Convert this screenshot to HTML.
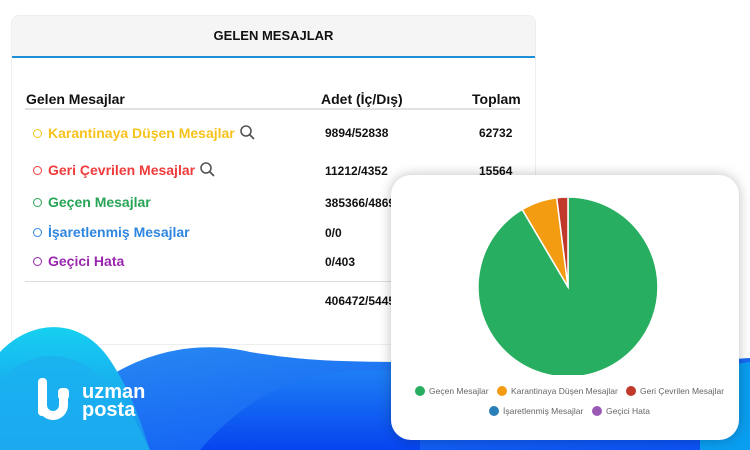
<!DOCTYPE html>
<html><head><meta charset="utf-8"><style>
*{margin:0;padding:0;box-sizing:border-box}
body{width:750px;height:450px;overflow:hidden;background:#fff;position:relative;font-family:"Liberation Sans",Arial,sans-serif}
.card{position:absolute;left:11px;top:15px;width:525px;height:330px;border:1px solid #eee;border-radius:8px;background:#fff;overflow:hidden}
.hdr{height:42px;background:#f5f5f5;border-bottom:2px solid #1e90d6;text-align:center;font-weight:bold;font-size:13px;line-height:40px;color:#111}
.t{position:absolute;font-weight:bold;color:#111}
.r{position:absolute;font-weight:bold;font-size:14px}
.n{position:absolute;font-weight:bold;font-size:12px;color:#111}
.c{display:inline-block;width:9px;height:9px;border:1px solid;border-radius:50%;margin-right:6px;vertical-align:0}
.chart{position:absolute;left:391px;top:175px;width:348px;height:265px;background:#fff;border-radius:20px;box-shadow:0 0 12px rgba(0,0,0,.25)}
.lg{position:absolute;font-size:8.5px;color:#666;white-space:nowrap}
.d{display:inline-block;width:10px;height:10px;border-radius:50%;vertical-align:-2px;margin-right:4px}
</style></head><body>
<div class="card">
<div class="hdr">GELEN MESAJLAR</div>
<div class="t" style="left:14px;top:75px;font-size:14px">Gelen Mesajlar</div>
<div class="t" style="left:309px;top:75px;font-size:14px">Adet (İç/Dış)</div>
<div class="t" style="left:460px;top:75px;font-size:14px">Toplam</div>
<div style="position:absolute;left:13px;top:92px;width:495px;height:2px;background:#e2e2e2"></div>
<div class="r" style="left:21px;top:108px;color:#f7c21b"><span class="c"></span>Karantinaya Düşen Mesajlar <svg width="17" height="17" viewBox="0 0 17 17" style="vertical-align:-3px"><circle cx="7" cy="7" r="5" fill="none" stroke="#555" stroke-width="1.6"/><path d="M10.5 10.5L15 15" stroke="#555" stroke-width="1.8"/></svg></div>
<div class="r" style="left:21px;top:145px;color:#ef3b3b"><span class="c"></span>Geri Çevrilen Mesajlar <svg width="17" height="17" viewBox="0 0 17 17" style="vertical-align:-3px"><circle cx="7" cy="7" r="5" fill="none" stroke="#555" stroke-width="1.6"/><path d="M10.5 10.5L15 15" stroke="#555" stroke-width="1.8"/></svg></div>
<div class="r" style="left:21px;top:178px;color:#27a455"><span class="c"></span>Geçen Mesajlar</div>
<div class="r" style="left:21px;top:208px;color:#2f86e0"><span class="c"></span>İşaretlenmiş Mesajlar</div>
<div class="r" style="left:21px;top:237px;color:#9b27af"><span class="c"></span>Geçici Hata</div>
<div class="n" style="left:313px;top:110px">9894/52838</div><div class="n" style="left:467px;top:110px">62732</div>
<div class="n" style="left:313px;top:148px">11212/4352</div><div class="n" style="left:467px;top:148px">15564</div>
<div class="n" style="left:313px;top:180px">385366/4869</div>
<div class="n" style="left:313px;top:210px">0/0</div>
<div class="n" style="left:313px;top:239px">0/403</div>
<div style="position:absolute;left:13px;top:265px;width:495px;height:1px;background:#ddd"></div>
<div class="n" style="left:313px;top:278px">406472/5445</div>
</div>
<svg style="position:absolute;left:0;top:300px" width="750" height="150" viewBox="0 0 750 150">
<defs>
<linearGradient id="g1" x1="0" y1="0" x2="0" y2="1"><stop offset="0" stop-color="#16d0f0"/><stop offset="1" stop-color="#1a8cf0"/></linearGradient>
<linearGradient id="g2" x1="0" y1="0" x2="1" y2="1"><stop offset="0" stop-color="#2a8cf2"/><stop offset="1" stop-color="#0a4ff5"/></linearGradient>
<linearGradient id="g3" x1="0" y1="0" x2="0" y2="1"><stop offset="0" stop-color="#1e7ff4"/><stop offset="1" stop-color="#0644f0"/></linearGradient>
</defs>
<path d="M90 90 C140 50 200 40 250 52 C300 60 330 62 420 62 L600 62 C680 60 720 60 750 58 L750 150 L0 150 L0 120Z" fill="url(#g2)"/>
<path d="M0 52 C30 20 80 15 110 60 C130 90 140 120 150 150 L0 150Z" fill="url(#g1)"/>
<path d="M0 80 C40 40 90 50 130 110 L150 150 L0 150Z" fill="#1bb0f0" opacity=".8"/>
<path d="M200 150 C260 80 330 60 420 75 L420 150Z" fill="url(#g3)"/>
<path d="M700 70 L750 62 L750 150 L700 150Z" fill="#0a9ef0"/>
<g fill="#fff">
<rect x="38" y="78" width="9" height="38" rx="4"/>
<path d="M38 105 a15 15 0 0 0 30 0 v-10 h-9 v10 a6 6 0 0 1 -12 0z"/>
<rect x="58" y="88" width="11" height="12" rx="4"/>
</g>
<text x="82" y="98" fill="#fff" font-family="Liberation Sans,sans-serif" font-weight="bold" font-size="20">uzman</text>
<text x="82" y="116" fill="#fff" font-family="Liberation Sans,sans-serif" font-weight="bold" font-size="20">posta</text>
</svg>
<div class="chart">
<svg style="position:absolute;left:0;top:0" width="348" height="200">
<g transform="translate(-391,-175)" stroke="#fff" stroke-width="1.5">
<path d="M568 287 L568 197 A90 90 0 1 1 522.2 209.5Z" fill="#27ae60"/>
<path d="M568 287 L522.2 209.5 A90 90 0 0 1 556.7 197.7Z" fill="#f39c12"/>
<path d="M568 287 L556.7 197.7 A90 90 0 0 1 568 197Z" fill="#c0392b"/>
</g></svg>
<div class="lg" style="left:24px;top:211px"><span class="d" style="background:#27ae60"></span>Geçen Mesajlar</div>
<div class="lg" style="left:106px;top:211px"><span class="d" style="background:#f39c12"></span>Karantinaya Düşen Mesajlar</div>
<div class="lg" style="left:235px;top:211px"><span class="d" style="background:#c0392b"></span>Geri Çevrilen Mesajlar</div>
<div class="lg" style="left:98px;top:231px"><span class="d" style="background:#2980b9"></span>İşaretlenmiş Mesajlar</div>
<div class="lg" style="left:201px;top:231px"><span class="d" style="background:#9b59b6"></span>Geçici Hata</div>
</div>
</body></html>
